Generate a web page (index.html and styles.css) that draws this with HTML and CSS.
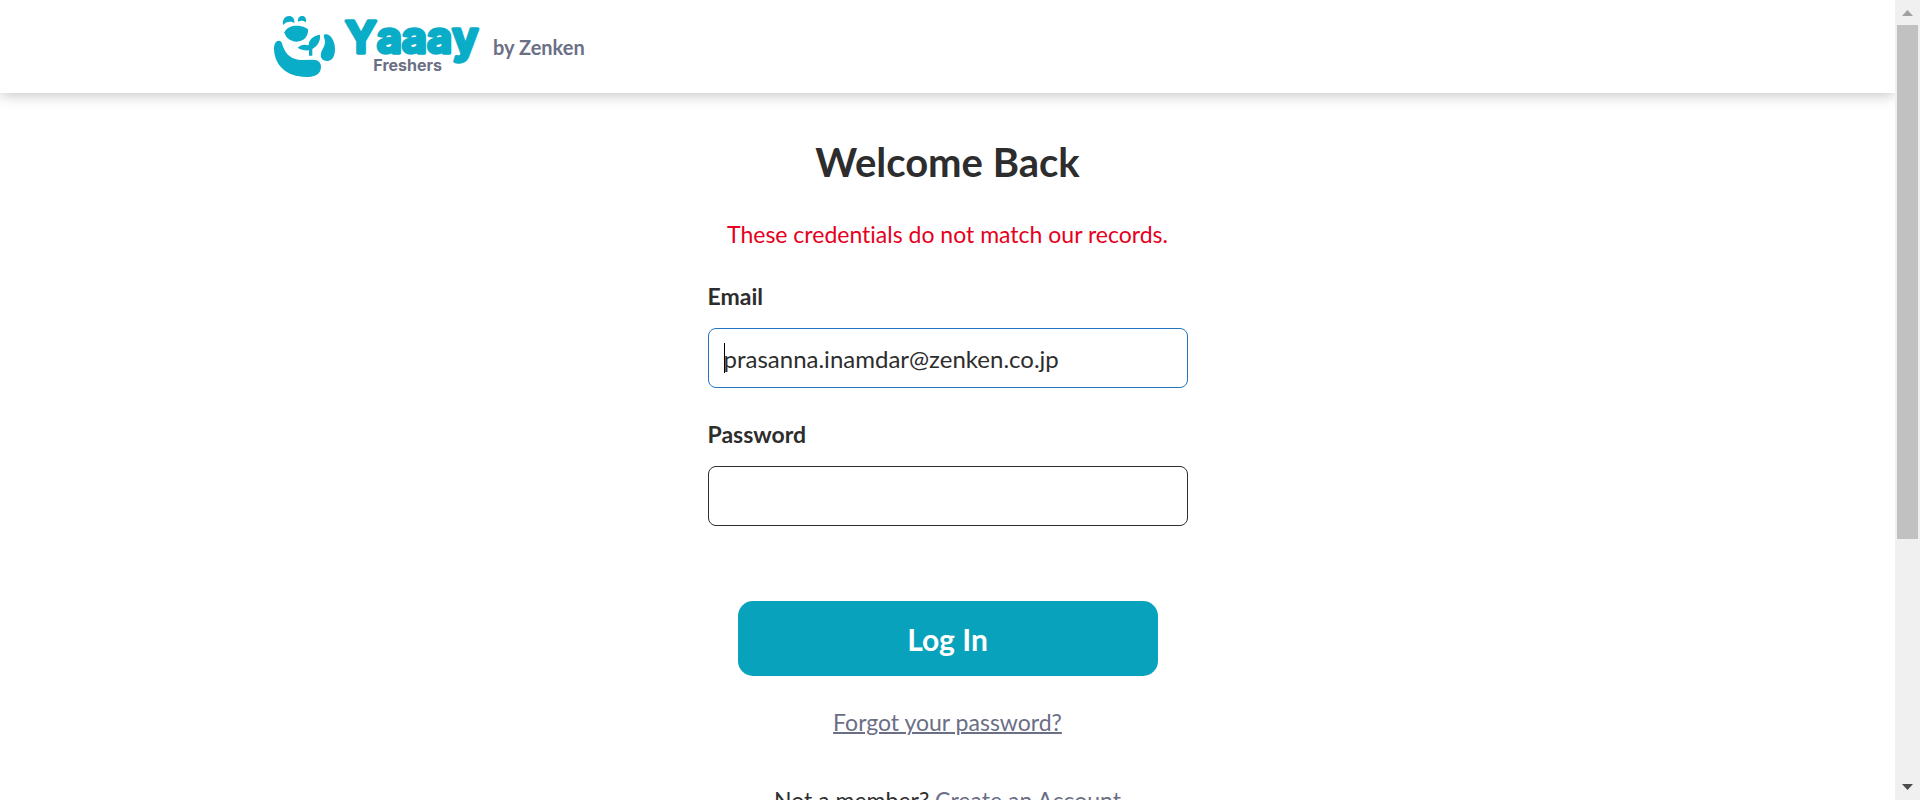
FILE: index.html
```html
<!DOCTYPE html>
<html lang="en">
<head>
<meta charset="utf-8">
<title>Log In - Yaaay Freshers</title>
<link rel="stylesheet" href="styles.css">
</head>
<body>
<div class="page">
  <header class="header">
    <div class="header-inner">
      <svg class="logo" viewBox="42 42 621 195" role="img" aria-label="Yaaay Freshers">
        <g class="logo-mark">
          <path d="M69 75C66 58 77 48 87 48C97 48 105 56 103 69C93 62 78 64 69 75Z"/>
          <path d="M114 65C112 54 119 48 127 48C135 48 140 56 138 67C131 61 122 61 114 65Z"/>
          <path d="M73 97C80 82 95 77 110 77C125 77 138 82 144 88C146 108 132 125 110 125C90 125 76 112 73 97Z"/>
          <path d="M42 145C42 132 48 122 56 122C66 122 66 132 70 142C78 165 98 180 125 180L160 179C175 179 183 188 183 200C183 222 165 231 138 231C80 231 42 195 42 145Z"/>
          <path d="M180 104C182 125 172 137 157 147V167H147V151C135 152 122 150 113 143C122 135 132 132 146 136C146 118 160 107 180 104Z"/>
          <path d="M192 104C205 97 225 115 225 147C225 168 217 183 202 183C188 183 180 175 183 160C185 148 195 140 195 125C195 115 190 112 192 104Z"/>
        </g>
        <text class="logo-name" x="255" y="158">Yaaay</text>
        <text class="logo-sub" x="340" y="212">Freshers</text>
      </svg>
      <span class="byline">by Zenken</span>
    </div>
  </header>
  <main class="main">
    <h1 class="title">Welcome Back</h1>
    <p class="error">These credentials do not match our records.</p>
    <form class="form">
      <label class="label" for="email">Email</label>
      <div class="field field-active">
        <input class="input" id="email" type="email" value="prasanna.inamdar@zenken.co.jp">
      </div>
      <label class="label" for="password">Password</label>
      <div class="field">
        <input class="input" id="password" type="password">
      </div>
      <button class="submit" type="submit">Log In</button>
    </form>
    <a class="forgot" href="#">Forgot your password?</a>
    <p class="signup">Not a member? <a class="signup-link" href="#">Create an Account</a></p>
  </main>
</div>
<div class="scrollbar" aria-hidden="true">
  <svg class="arrow arrow-up" viewBox="0 0 11 6"><path d="M0 6L5.5 0L11 6Z"/></svg>
  <div class="track"><div class="thumb"></div></div>
  <svg class="arrow arrow-down" viewBox="0 0 11 6"><path d="M0 0L5.5 6L11 0Z"/></svg>
</div>
</body>
</html>
```
FILE: styles.css
```css
* {
  box-sizing: border-box;
}

body {
  display: flex;
  height: 100vh;
  margin: 0;
  overflow: hidden;
  background: #fff;
  color: #2d2d2d;
  font-family: Lato, "Open Sans", sans-serif;
  font-size: 23px;
  font-variant-ligatures: none;
  line-height: 36px;
}

.page {
  flex: 1;
  min-width: 0;
  overflow: hidden;
}

.header {
  box-shadow: 0 0 15px rgba(0, 0, 0, 0.3);
}

.header-inner {
  display: flex;
  align-items: center;
  gap: 12px;
  max-width: 1347px;
  margin: 0 auto;
  padding: 14px 0;
}

.logo {
  width: 207px;
  height: 65px;
  overflow: visible;
}

.logo-mark {
  fill: #0aadc8;
}

.logo-name {
  fill: #0aadc8;
  stroke: #0aadc8;
  stroke-width: 10px;
  stroke-linejoin: round;
  font-family: Inter, sans-serif;
  font-size: 130px;
  font-weight: 700;
  font-kerning: none;
}

.logo-sub {
  fill: #6b6f86;
  font-family: Inter, sans-serif;
  font-size: 48px;
  font-weight: 700;
}

.byline {
  color: #6b6f86;
  font-size: 20px;
  font-weight: 700;
}

.main {
  display: flex;
  flex-direction: column;
  align-items: center;
  padding: 39px 16px 60px;
}

.title {
  margin: 0 0 24px;
  font-size: 40px;
  font-weight: 700;
  line-height: 60px;
}

.error {
  margin: 0 0 26px;
  color: #e60020;
}

.form {
  display: flex;
  flex-direction: column;
  width: 100%;
  max-width: 480px;
}

.label {
  margin-bottom: 14px;
  font-weight: 700;
}

.field {
  position: relative;
  margin-bottom: 28px;
}

.input {
  display: block;
  width: 100%;
  height: 60px;
  padding: 0 15px;
  border: 1px solid #2d2d2d;
  border-radius: 8px;
  outline: none;
  background: #fff;
  color: inherit;
  font: inherit;
  font-size: 24px;
}

.field-active .input {
  border-color: #2374c0;
}

.field-active::after {
  content: "";
  position: absolute;
  top: 15px;
  left: 16px;
  width: 1px;
  height: 30px;
  background: #000;
}

.submit {
  align-self: center;
  width: 100%;
  max-width: 420px;
  height: 75px;
  margin: 47px 0 28px;
  border: 0;
  border-radius: 15px;
  background: #08a2bc;
  color: #fff;
  font-family: inherit;
  font-size: 30px;
  font-weight: 700;
}

.forgot {
  color: #6b6f86;
  text-decoration-thickness: 2px;
}

.signup {
  margin: 42px 0 0;
}

.signup-link {
  color: #6b6f86;
  text-decoration: none;
}

.scrollbar {
  display: flex;
  flex-direction: column;
  align-items: center;
  width: 25px;
  padding: 10px 2px;
  background: #f0f0f0;
}

.arrow {
  width: 11px;
  height: 6px;
}

.arrow-up {
  fill: #a0a0a0;
}

.arrow-down {
  fill: #4c4c4c;
}

.track {
  flex: 1;
  width: 100%;
  margin: 9px 0;
}

.thumb {
  height: 68.5%;
  background: #c1c1c1;
}
```
